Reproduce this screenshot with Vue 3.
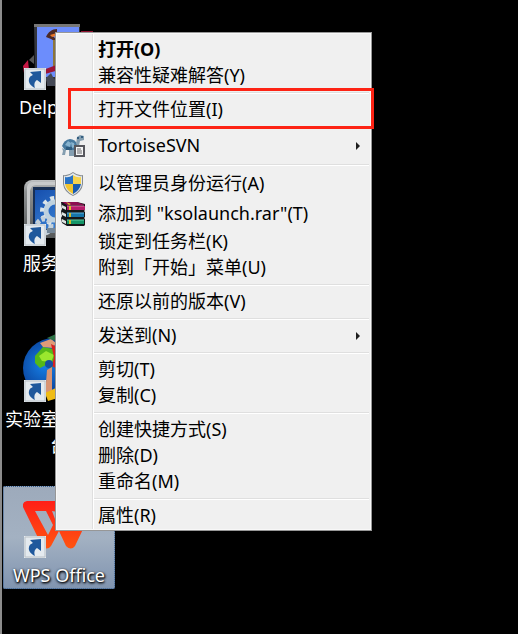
<template>
    <main class="desktop">
        <div class="icons">
            <button v-for="x in shortcuts" :key="x.icon" type="button" class="shortcut" :class="{ selected: x.selected }">
                <span class="picture">
                    <svg v-if="x.icon === 'delphi'" viewBox="0 0 72 72" width="72" height="72">
                        <path d="M11 6h46v61H30l-7-4-11 1z" fill="#34363c" />
                        <path d="M11 6h46v3H11z" fill="#777" />
                        <path d="M14 9h42v50H14z" fill="#6c8dfc" />
                        <path d="M23 19c2-5 6-8 11-8v6l-5 1c3 1 4 3 4 6l-5-3z" fill="#4d2925" />
                        <path d="M27 17l10-3v3l-8 2z" fill="#e87628" />
                        <path d="M30 22h5v28h-5z" fill="#8c753a" />
                        <path d="M0 48l5-6 1 10-5 3z" fill="#c51643" />
                        <path d="M6 42l5-5v9z" fill="#555" />
                        <path d="M20 52l16-6v6l-14 4z" fill="#9b1536" />
                        <path d="M23 60l5-5 3 6 5 2v5H24z" fill="#444956" />
                        <path d="M58 13h12v2H58z" fill="#8f1230" />
                    </svg>
                    <svg v-else-if="x.icon === 'service'" viewBox="0 0 72 72" width="72" height="72">
                        <defs>
                            <linearGradient id="frame" x1="0" y1="0" x2="0" y2="1">
                                <stop offset="0" stop-color="#bfc1c2" />
                                <stop offset="0.2" stop-color="#8d9091" />
                                <stop offset="1" stop-color="#555859" />
                            </linearGradient>
                            <linearGradient id="screen" x1="0" y1="0" x2="1" y2="1">
                                <stop offset="0" stop-color="#164fae" />
                                <stop offset="1" stop-color="#4794e2" />
                            </linearGradient>
                        </defs>
                        <rect x="1" y="6" width="68" height="58" rx="8" fill="url(#frame)" />
                        <path d="M4 13q1-5 6-5h56v3H13q-5 0-6 6v34H4z" fill="#c8cacb" />
                        <rect x="10" y="13" width="56" height="43" fill="#172f55" />
                        <rect x="12" y="16" width="54" height="39" fill="url(#screen)" />
                        <circle cx="32" cy="37" r="9" fill="none" stroke="#bfd2df" stroke-width="5" />
                        <circle cx="32" cy="37" r="13" fill="none" stroke="#dae4e9" stroke-width="4" stroke-dasharray="4 4" />
                        <circle cx="21" cy="52" r="7" fill="none" stroke="#c3d0da" stroke-width="5" stroke-dasharray="4 2" />
                        <path d="M24 54h33v5H24z" fill="#738698" />
                    </svg>
                    <svg v-else-if="x.icon === 'globe'" viewBox="0 0 72 72" width="72" height="72">
                        <defs>
                            <radialGradient id="sea" cx="0.35" cy="0.45" r="0.6">
                                <stop offset="0" stop-color="#1681e8" />
                                <stop offset="1" stop-color="#073085" />
                            </radialGradient>
                        </defs>
                        <ellipse cx="31" cy="38" rx="31" ry="30" fill="url(#sea)" />
                        <path d="M12 26l8-9 10 2 3 13-5 7-5-4-6 3-5-5z" fill="#55b818" />
                        <path d="M16 26l7-5 8 4-3 7-9-1z" fill="#9be72e" />
                        <path d="M17 13l11-4 5 4-3 5-10-1z" fill="#df9b78" />
                        <path d="M24 8l9-4v7z" fill="#2d7245" />
                        <path d="M28 14l6 3v22l-5-3 2-9z" fill="#d82121" />
                        <circle cx="26" cy="34" r="4" fill="#174fa2" />
                        <path d="M24 40l5-3v26l-7 2z" fill="#d89473" />
                        <path d="M22 63l13-6v11l-10 3z" fill="#efbc16" />
                    </svg>
                    <svg v-else viewBox="0 0 72 72" width="72" height="72">
                        <defs>
                            <linearGradient id="wps" x1="0" y1="0" x2="0" y2="1">
                                <stop offset="0" stop-color="#ff1f18" />
                                <stop offset="1" stop-color="#ff5410" />
                            </linearGradient>
                        </defs>
                        <path fill="url(#wps)" fill-rule="evenodd" d="M4 15h28l5 13 5-13h26q4 1 3 5L52 60q-4 5-9 0l-7-15-8 15q-4 5-9 0L0 21q-1-5 4-6zM12 25l13 24 5-10-7-14zM29 25l3 8 3-7z" />
                    </svg>
                    <svg class="arrow" viewBox="0 0 22 22" width="22" height="22">
                        <path d="M0 0h22v22H0z" fill="#e4eaef" />
                        <path d="M1 1h20v20H1z" fill="none" stroke="#b9c0c6" />
                        <path d="M6 4l11-1v12l-4-3c-3 2-3 5-2 8-4-2-7-5-6-9 1-3 2-3 4-4z" fill="#1f589c" />
                    </svg>
                </span>
                <span class="name">{{ x.name }}</span>
            </button>
        </div>

        <div class="menu" role="menu">
            <section v-for="(group, i) in groups" :key="i" class="group">
                <button v-for="x in group" :key="x.text" type="button" role="menuitem" class="item" :class="[x.kind, { tall: x.icon }]">
                    <span class="gutter">
                        <svg v-if="x.icon === 'tortoise'" viewBox="0 0 24 24" width="24" height="24">
                            <path d="M1 12q2-6 8-7 5 0 8 6l-2 5H4z" fill="#47799e" />
                            <path d="M4 11l3-4 3 2-1 4zM10 8l3 1 1 4-3 1z" fill="#88b3ce" />
                            <path d="M5 13h6v3H5z" fill="#2d5c80" />
                            <path d="M15 10l1-7 3-2 4 1v4l-4 1-1 5zM1 14l4 2-1 5H1l1-4zM8 16h5v6H8z" fill="#849eb0" />
                            <path d="M16 3h2v2h-2zM20 2h2v2h-2z" fill="#355e80" />
                            <path d="M13 11h11v12H13z" fill="#57575d" />
                            <path d="M15 13h7v8h-7z" fill="#f5f5f5" />
                            <path d="M16 15h4M16 17h5M16 19h5" stroke="#66666b" />
                        </svg>
                        <svg v-else-if="x.icon === 'shield'" viewBox="0 0 24 24" width="24" height="24">
                            <path d="M12 0q5 4 10 3v9q-1 8-10 12Q3 20 2 12V3q5 1 10-3z" fill="#858b90" />
                            <path d="M12 1q5 4 9 3v8q-1 7-9 11-8-4-9-11V4q4 1 9-3z" fill="#e5e9eb" />
                            <path d="M12 3v9H4V5q4 1 8-2z" fill="#2872c5" />
                            <path d="M12 3q4 3 8 2v7h-8z" fill="#f6d34d" />
                            <path d="M4 12h8v10q-7-4-8-10z" fill="#f2c52f" />
                            <path d="M12 12h8q-1 6-8 10z" fill="#195bb0" />
                        </svg>
                        <svg v-else-if="x.icon === 'books'" viewBox="0 0 24 24" width="24" height="24">
                            <path d="M0 0h16l8 2v6l-1 1 1 1v5l-1 1 1 1v6l-1 1H6l-5-3-1-5 1-2-1-5 1-2z" fill="#15171a" />
                            <path d="M1 0h15l8 3H6z" fill="#8c0d50" />
                            <path d="M6 4h18v4H6z" fill="#b51c6b" />
                            <path d="M6 11h17v4H6z" fill="#1675aa" />
                            <path d="M6 18h17v4H6z" fill="#149568" />
                            <path d="M1 3l4 2v3L1 6zM1 10l4 2v3l-4-2zM1 17l4 2v3l-4-2z" fill="#dce2df" />
                            <path d="M6 4h17" stroke="#e06aa6" />
                            <path d="M6 11h17" stroke="#62b4dc" />
                            <path d="M6 18h17" stroke="#63cfa6" />
                            <path d="M8 4h2v4H8zM8 11h2v4H8zM8 18h2v4H8z" fill="#d9bd27" />
                            <path d="M5 0l5 2-2 1z" fill="#d9bd27" />
                        </svg>
                    </span>
                    <span class="text">{{ x.text }}</span>
                    <svg v-if="x.sub" class="more" viewBox="0 0 4 8" width="4" height="8">
                        <path d="M0 0l4 4-4 4z" fill="#1e1e1e" />
                    </svg>
                </button>
            </section>
        </div>
    </main>
</template>

<script setup>
const shortcuts = [
    { icon: "delphi", name: "Delphi 10" },
    { icon: "service", name: "服务管理" },
    { icon: "globe", name: "实验室管理平台" },
    { icon: "wps", name: "WPS Office", selected: true }
]

const groups = [
    [{ text: "打开(O)", kind: "default" }, { text: "兼容性疑难解答(Y)" }],
    [{ text: "打开文件位置(I)", kind: "marked" }, { text: "TortoiseSVN", icon: "tortoise", sub: true }],
    [
        { text: "以管理员身份运行(A)", icon: "shield" },
        { text: '添加到 "ksolaunch.rar"(T)', icon: "books" },
        { text: "锁定到任务栏(K)" },
        { text: "附到「开始」菜单(U)" }
    ],
    [{ text: "还原以前的版本(V)" }],
    [{ text: "发送到(N)", sub: true }],
    [{ text: "剪切(T)" }, { text: "复制(C)" }],
    [{ text: "创建快捷方式(S)" }, { text: "删除(D)" }, { text: "重命名(M)" }],
    [{ text: "属性(R)" }]
]
</script>

<style>
body {
    background: #000;
}
</style>

<style scoped>
.desktop {
    position: relative;
    box-sizing: border-box;
    min-height: 100vh;
    padding: 18px 0 0 1px;
    border-left: 2px solid #8c8c8c;
    background: #000;
    font-family: "Noto Sans", "Noto Sans CJK SC", sans-serif;
    font-size: 18px;
    overflow: hidden;
}

button {
    border: 0;
    padding: 0;
    background: none;
    font: inherit;
    color: inherit;
}

.icons {
    display: grid;
    grid-auto-rows: 156px;
    width: 112px;
    align-items: start;
}

.shortcut {
    display: flex;
    flex-direction: column;
    align-items: center;
    gap: 4px;
    width: 100%;
    min-height: 103px;
    color: #fff;
}

.shortcut.selected {
    background: linear-gradient(#9daabb, #a3b1c2 50%, #8094b0);
    outline: 1px dotted #335d90;
    outline-offset: -1px;
    border-radius: 2px;
}

.picture {
    position: relative;
    height: 72px;
}

.picture svg {
    display: block;
}

.picture .arrow {
    position: absolute;
    left: 1px;
    bottom: 0;
}

.name {
    line-height: 26px;
    text-shadow: 1px 1px 2px #000, 0 1px 3px #000;
}

.menu {
    position: absolute;
    top: 32px;
    left: 53px;
    box-sizing: border-box;
    width: 317px;
    padding: 4px 2px 1px;
    border: 1px solid #979797;
    background: linear-gradient(to right, transparent 36px, #dfdfdf 36px, #dfdfdf 37px, #fff 37px, #fff 38px, transparent 38px) #f0f0f0;
    box-shadow: inset 0 0 0 1px #f8f8f8;
}

.group + .group::before {
    content: "";
    display: block;
    height: 1px;
    margin: 3px 0 3px 36px;
    border-bottom: 1px solid #fff;
    background: #dfdfdf;
}

.item {
    position: relative;
    display: flex;
    align-items: center;
    width: 100%;
    height: 26px;
    text-align: left;
    white-space: nowrap;
}

.item.tall {
    height: 30px;
}

.item.default {
    font-weight: bold;
}

.item.marked {
    margin-bottom: 8px;
}

.item.marked::after {
    content: "";
    position: absolute;
    inset: -9px -5px -6px 10px;
    border: 3px solid #fd2314;
}

.gutter {
    display: flex;
    width: 40px;
    padding-left: 3px;
    box-sizing: border-box;
}

.text {
    flex: 1;
    padding-bottom: 2px;
    line-height: 24px;
}

.more {
    margin-right: 9px;
}
</style>
